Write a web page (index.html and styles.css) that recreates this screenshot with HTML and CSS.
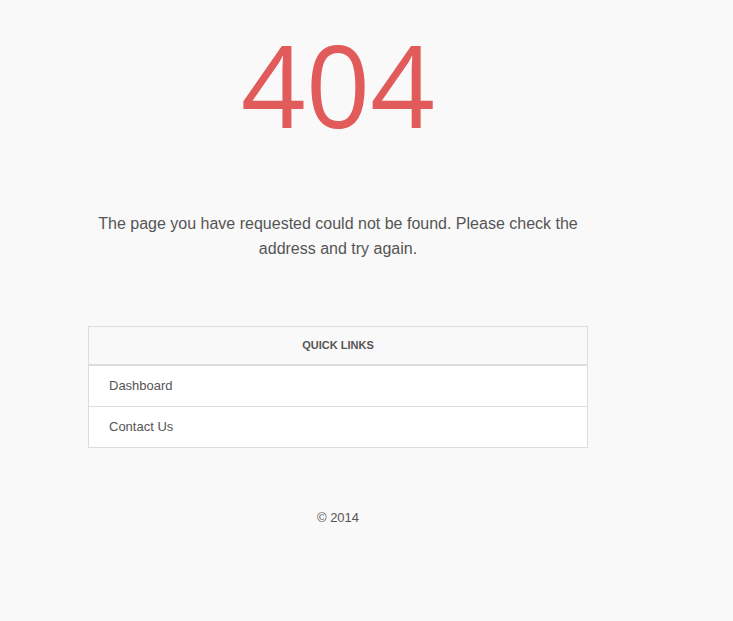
FILE: index.html
```html
<!DOCTYPE html>
<html>
<head>
<meta charset="utf-8">
<title>404</title>
<link rel="stylesheet" href="styles.css">
</head>
<body>
<div class="wrap">
  <h1 class="code">404</h1>
  <p class="msg">The page you have requested could not be found. Please check the address and try again.</p>
  <div class="links">
    <div class="links-head">Quick Links</div>
    <a class="link-row" href="#">Dashboard</a>
    <a class="link-row" href="#">Contact Us</a>
  </div>
  <div class="footer">&copy; 2014</div>
</div>
</body>
</html>
```
FILE: styles.css
```css
html, body {
  margin: 0;
  padding: 0;
  background: #f9f9f9;
}
body {
  font-family: "Liberation Sans", Arial, sans-serif;
  color: #555;
}
.wrap {
  width: 500px;
  margin-left: 88px;
  display: flex;
  flex-direction: column;
}
.code {
  margin: 28px 0 0;
  font-family: "Open Sans", sans-serif;
  font-weight: 400;
  font-size: 113px;
  line-height: 113px;
  color: #e25b5b;
  text-align: center;
}
.msg {
  margin: 70px 0 0;
  font-size: 16px;
  line-height: 25px;
  text-align: center;
  color: #555;
}
.links {
  margin-top: 65px;
  border: 1px solid #ddd;
  background: #fff;
  display: flex;
  flex-direction: column;
}
.links-head {
  background: #f9f9f9;
  border-bottom: 2px solid #ddd;
  height: 37px;
  line-height: 37px;
  text-align: center;
  text-transform: uppercase;
  font-size: 11px;
  font-weight: bold;
  color: #555;
}
.link-row {
  display: block;
  height: 40px;
  line-height: 40px;
  padding-left: 20px;
  font-size: 13px;
  color: #555;
  text-decoration: none;
}
.link-row + .link-row {
  border-top: 1px solid #ddd;
}
.footer {
  margin-top: 62px;
  text-align: center;
  font-size: 13px;
  color: #555;
}
```
